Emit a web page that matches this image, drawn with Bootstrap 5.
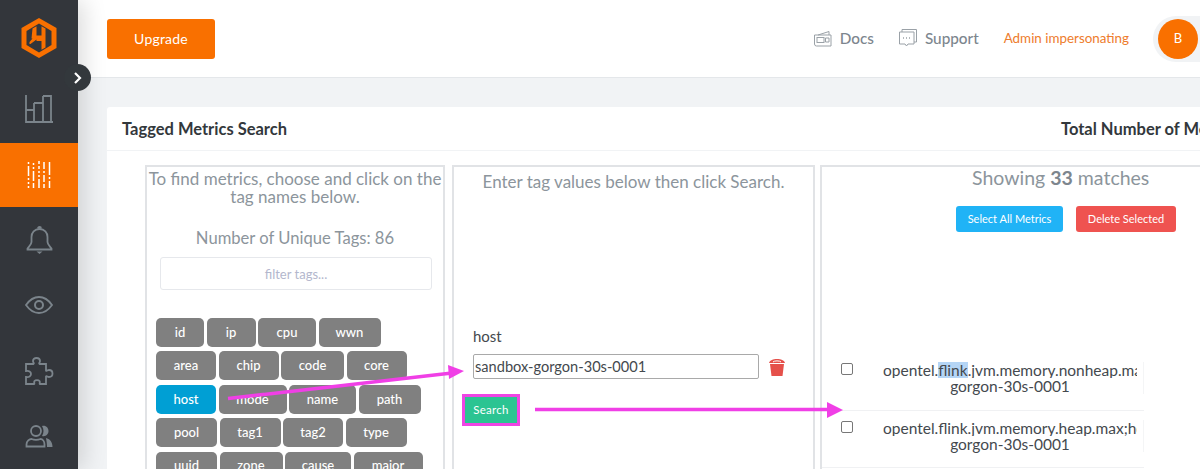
<!DOCTYPE html>
<html lang="en">
<head>
<meta charset="utf-8">
<title>Tagged Metrics Search</title>
<link href="https://cdn.jsdelivr.net/npm/bootstrap@5.3.0/dist/css/bootstrap.min.css" rel="stylesheet">
<style>
html,body{height:469px;overflow:hidden}
body{font-family:"Lato","Noto Sans",sans-serif;color:#3a3f44;background:#f1f3f5;font-size:16px;width:1200px;position:relative}
.shell{height:469px;width:1200px}
.rail{width:78px;flex:none;background:#33363b;box-shadow:6px 0 22px rgba(0,0,0,.14);position:relative;z-index:3}
.rail-logo{height:75px}
.rail-item{height:65.5px}
.rail-item.on{background:#f97000;height:64px}
.rail-item.first{height:68px}
.rail-toggle{position:absolute;left:64px;top:64px;width:27px;height:27px;border-radius:50%;background:#33383c;z-index:4}
.stage{width:1122px;flex:none;min-width:0}
.topbar{height:78px;background:#fff;border-bottom:1px solid #e4e7ea;padding-left:29px;flex:none}
.btn-up{background:#f97000;color:#fff;width:108px;height:40px;border-radius:3px;font-size:14px;border:0;padding:0;letter-spacing:.2px}
.toplink{color:#7d868e;font-size:15.3px;font-weight:500}
.gap-wide{margin-left:25px}
.admin{color:#ee7c2c;font-size:13.4px}
.halo{background:#f1f3f5;border-radius:24px 0 0 24px;width:47px;height:46px;padding-left:5px}
.avatar{width:40px;height:40px;border-radius:50%;background:#f97000;color:#fff;font-size:13px;flex:none}
.work{padding:29px 0 0 29px}
.sheet{width:1110px;height:400px;background:#fff;border-radius:3px 0 0 0}
.sheet-head{height:44px;border-bottom:1px solid #f1f3f5;padding:2px 0 0 15px;white-space:nowrap;overflow:hidden}
.sheet-title{font-size:16.5px;font-weight:700;color:#33383c;width:939px;flex:none}
.panes{padding:14px 0 0 38px;gap:7px}
.pane{border:2px solid #e1e3e6;border-bottom:0;height:320px;background:#fff;flex:none}
.pane-a{width:300px}
.pane-b{width:363px}
.pane-c{width:400px;margin-left:-2px}
.hint{color:#8c959c;font-size:17px;line-height:18px;text-align:center}
.hint-a{padding-top:3px}
.hint-count{margin-top:21px;line-height:22px;font-size:16.6px}
.filter{margin:8px 0 0 13px;width:272px;height:33px;border:1px solid #e6e8ec;border-radius:3px;font-size:13px;color:#b3b7cd;text-align:center;background:#fff}
.filter::placeholder{color:#b3b7cd}
.chips{margin:28px 0 0 9px;gap:4.4px 2.5px;width:275px}
.chip{height:29px;background:#808080;color:#fff;border-radius:5px;font-size:13px;font-weight:500;border:0;padding:0}
.chip.picked{background:#009fd4}
.w48{width:48px}.w49{width:49px}.w58{width:58px}.w60{width:60px}.w61{width:61px}.w62{width:62px}.w63{width:63px}.w66{width:66px}.w67{width:67px}.w68{width:68px}.w69{width:69px}
.hint-b{padding-top:6px}
.tag-label{margin:135px 0 0 19px;font-size:15px;line-height:20px;color:#44494e}
.tag-row{margin:8px 0 0 19px;gap:10px}
.tag-input{width:286px;height:25px;border:1px solid #a9a9a9;border-radius:2px;font-size:14.6px;color:#44494e;padding:0 1px;background:#fff}
.go-wrap{margin:15px 0 0 8px;width:58px;height:32px;border:3px solid #ef45e4;padding:0}
.go{background:#2bc492;color:#fff;width:100%;height:100%;font-size:11.5px;border:0;padding:0;letter-spacing:.3px}
.show{color:#8c959c;font-size:19.5px;line-height:24px;margin:-1px 0 0 150px}
.show b{font-weight:700;color:#7d868e}
.acts{margin:16px 0 0 134px;gap:13px}
.act{height:26px;border-radius:3px;color:#fff;font-size:11px;border:0;padding:0}
.act-all{background:#20b3f6;width:107px}
.act-del{background:#ef5350;width:100px}
.rows{margin-top:123px;width:322px}
.line-a{padding:0 0 0 19px}
.line-a.one{height:56px;padding-top:8px;border-bottom:1px solid #f0f1f3}
.line-a.two{height:57px;padding-top:10px;border-bottom:1px solid #f0f1f3}
.tick{width:12px;height:12px;flex:none;border:1px solid #777;border-radius:2px;background:#fff;margin:0;appearance:none;-webkit-appearance:none}
.metric{width:261px;margin-left:30px;padding-right:6px;font-size:15.5px;line-height:16px;color:#44494e;border-right:1px solid #f4f5f6;height:32px;margin-top:-1px}
.metric-top{overflow:hidden;white-space:nowrap}
.metric-sub{text-align:center}
.hl{background:#b5d5f5}
.overlay{position:absolute;left:0;top:0;z-index:5;pointer-events:none}
</style>
</head>
<body>
<div class="shell d-flex">
  <aside class="rail d-flex flex-column align-items-center">
    <div class="rail-logo w-100 d-flex justify-content-center align-items-center">
      <svg width="36" height="40" viewBox="0 0 36 40">
        <path d="M18 0 35.500 10v20L18 40 .5 30V10Z" fill="#f97000"/>
        <path d="M18 5.500 30.500 13v14L18 34.500 5.500 27V13Z" fill="#33363b"/>
        <path d="M11.500 10.500l4-2.200V17.500h5V8.300l4 2.200v19l-4 2.200V23h-5v-1.500l-6 4.500h-1v-2l3-3.500h-1z" fill="#f97000"/>
      </svg>
    </div>
    <div class="rail-item first w-100 d-flex justify-content-center align-items-center">
      <svg width="28" height="28" viewBox="0 0 28 28" fill="none" stroke="#7b848b" stroke-width="1.800">
        <path d="M1 0V27H28"/>
        <path d="M1 15H9V27M9 8H18V27M18 1H26V27M9 15V8M18 8V1"/>
      </svg>
    </div>
    <div class="rail-item on w-100 d-flex justify-content-center align-items-center">
      <svg width="24" height="28" viewBox="0 0 24 28" fill="none" stroke="#fff" stroke-width="1.500">
        <path d="M1.500 1v2M1.500 5v10M1.500 17v2M1.500 21v2M1.500 25v2" />
        <path d="M6.500 2v2M6.500 6v2M6.500 10v10M6.500 22v5"/>
        <path d="M12 0v3M12 5v3M12 10v2M12 14v2M12 18v9"/>
        <path d="M17 1v7M17 10v2M17 14v7M17 23v4"/>
        <path d="M22.500 1v13M22.500 16v2M22.500 20v7"/>
      </svg>
    </div>
    <div class="rail-item w-100 d-flex justify-content-center align-items-center">
      <svg width="27" height="28" viewBox="0 0 27 28" fill="none" stroke="#7b848b" stroke-width="1.800">
        <path d="M13.500 3c-5 0-8 3.500-8 8v5c0 2.500-2 4-4 6.500v1h24v-1c-2-2.500-4-4-4-6.500v-5c0-4.500-3-8-8-8z"/>
        <path d="M12 2.500a1.500 1.500 0 0 1 3 0" fill="#7b848b"/>
        <path d="M10.500 25.500h6l-3 2.500z" fill="#7b848b" stroke="none"/>
      </svg>
    </div>
    <div class="rail-item w-100 d-flex justify-content-center align-items-center">
      <svg width="28" height="18" viewBox="0 0 28 18" fill="none" stroke="#7b848b" stroke-width="1.800">
        <path d="M1 9c3.500-5 8-8 13-8s9.500 3 13 8c-3.500 5-8 8-13 8S4.500 14 1 9z"/>
        <circle cx="14" cy="9" r="4" stroke-width="2"/>
      </svg>
    </div>
    <div class="rail-item w-100 d-flex justify-content-center align-items-center">
      <svg width="29" height="28" viewBox="0 0 29 28" fill="none" stroke="#7b848b" stroke-width="1.800">
        <path d="M1 7h7.500c1-.5-.5-1.500-.5-3 0-2 1.500-3 3.500-3s3.500 1 3.500 3c0 1.500-1.500 2.500-.5 3H21v6.500c.5 1 1.500-.5 3-.5 2 0 3.500 1.500 3.500 3.500S26 20 24 20c-1.500 0-2.500-1.500-3-.5V27h-6c-1 0 .5-1.500-.5-3-1-1.200-4-1.200-5 0-1 1.500.5 3-.5 3H1v-7c3 .5 5-1 5-3s-2-3.500-5-3z"/>
      </svg>
    </div>
    <div class="rail-item w-100 d-flex justify-content-center align-items-center">
      <svg width="28" height="23" viewBox="0 0 28 23" fill="none" stroke="#7b848b" stroke-width="1.800">
        <circle cx="11" cy="6" r="5"/>
        <path d="M1.500 21.500v-2c0-3.500 3-5.500 5-5.500 2.500 1 6.500 1 9 0 2 0 4 2 4 5.500v2z"/>
        <path d="M17 1c4-1 6.500 2 6.500 5s-2.500 6-6.500 5c2-3 2-7 0-10z" fill="#7b848b" stroke="none"/>
        <path d="M21 13c3.500 1 6.500 3.500 6.500 9H22c0-3.500-.5-6-1-9z" fill="#7b848b" stroke="none"/>
      </svg>
    </div>
  </aside>
  <div class="rail-toggle d-flex justify-content-center align-items-center">
    <svg width="9" height="12" viewBox="0 0 9 12" fill="none" stroke="#fff" stroke-width="2.200"><path d="M2 1l5 5-5 5"/></svg>
  </div>
  <div class="stage d-flex flex-column">
    <header class="topbar d-flex align-items-center">
      <button class="btn-up" type="button">Upgrade</button>
      <div class="ms-auto d-flex align-items-center">
        <svg class="me-2" width="18" height="16" viewBox="0 0 18 16" fill="none" stroke="#9aa1a7" stroke-width="1"><path d="M.5 4h16.500v11H2.500a2 2 0 0 1-2-2zM4 4 15 .5V4"/><rect x="3" y="6.500" width="7" height="5"/><path d="M11.500 7h3.500v4h-3.500z"/></svg>
        <span class="toplink">Docs</span>
        <svg class="gap-wide me-2" width="18" height="19" viewBox="0 0 18 19" fill="none" stroke="#9aa1a7" stroke-width="1"><path d="M.5 3h14.500v12H9l-1.500 2L6 15H.5zM3 3V.5h14.500V13H15"/><path d="M4 9h1M7 9h1M10 9h1" stroke-width="1.500"/></svg>
        <span class="toplink">Support</span>
        <span class="admin gap-wide">Admin impersonating</span>
        <div class="halo ms-4 d-flex align-items-center">
          <div class="avatar d-flex justify-content-center align-items-center">B</div>
        </div>
      </div>
    </header>
    <main class="work">
      <section class="sheet">
        <div class="sheet-head d-flex align-items-center">
          <div class="sheet-title">Tagged Metrics Search</div>
          <div class="sheet-title">Total Number of Metrics</div>
        </div>
        <div class="panes d-flex">
          <div class="pane pane-a">
            <div class="hint hint-a">To find metrics, choose and click on the tag names below.</div>
            <div class="hint hint-count">Number of Unique Tags: 86</div>
            <input class="filter d-block" type="text" placeholder="filter tags...">
            <div class="chips d-flex flex-wrap">
              <button class="chip w48" type="button">id</button><button class="chip w49" type="button">ip</button><button class="chip w58" type="button">cpu</button><button class="chip w62" type="button">wwn</button>
              <button class="chip w60" type="button">area</button><button class="chip w60" type="button">chip</button><button class="chip w63" type="button">code</button><button class="chip w60" type="button">core</button>
              <button class="chip picked w60" type="button">host</button><button class="chip w68" type="button">mode</button><button class="chip w67" type="button">name</button><button class="chip w62" type="button">path</button>
              <button class="chip w61" type="button">pool</button><button class="chip w61" type="button">tag1</button><button class="chip w60" type="button">tag2</button><button class="chip w61" type="button">type</button>
              <button class="chip w61" type="button">uuid</button><button class="chip w63" type="button">zone</button><button class="chip w66" type="button">cause</button><button class="chip w69" type="button">major</button>
            </div>
          </div>
          <div class="pane pane-b">
            <div class="hint hint-b">Enter tag values below then click Search.</div>
            <div class="tag-label">host</div>
            <div class="tag-row d-flex align-items-center">
              <input class="tag-input" type="text" value="sandbox-gorgon-30s-0001">
              <svg width="16" height="18" viewBox="0 0 16 18"><path d="M1 6h14l-1.500 12h-11z" fill="#e5504a"/><path d="M0 5c1-3 4-4 8-4s7 1 8 4z" fill="#e5504a"/><path d="M4 4c1-1.500 7-1.500 8 0" fill="none" stroke="#fff" stroke-width="1"/></svg>
            </div>
            <div class="go-wrap"><button class="go d-block" type="button">Search</button></div>
          </div>
          <div class="pane pane-c">
            <div class="show">Showing <b>33</b> matches</div>
            <div class="acts d-flex">
              <button class="act act-all" type="button">Select All Metrics</button>
              <button class="act act-del" type="button">Delete Selected</button>
            </div>
            <div class="rows">
              <div class="line-a one d-flex">
                <input class="tick" type="checkbox" aria-label="select">
                <div class="metric">
                  <div class="metric-top">opentel.<span class="hl">flink</span>.jvm.memory.nonheap.max;host=sandbox-</div>
                  <div class="metric-sub">gorgon-30s-0001</div>
                </div>
              </div>
              <div class="line-a two d-flex">
                <input class="tick" type="checkbox" aria-label="select">
                <div class="metric">
                  <div class="metric-top">opentel.flink.jvm.memory.heap.max;host=sandbox-</div>
                  <div class="metric-sub">gorgon-30s-0001</div>
                </div>
              </div>
            </div>
          </div>
        </div>
      </section>
    </main>
  </div>
</div>
<svg class="overlay" width="1200" height="469" viewBox="0 0 1200 469">
  <path d="M228 398.500 452 373" stroke="#f03fe6" stroke-width="3.500" fill="none"/>
  <path d="M448 365 464 371 449 379Z" fill="#f03fe6"/>
  <path d="M535 409.500H828" stroke="#f03fe6" stroke-width="3.500" fill="none"/>
  <path d="M827 402 843 410 827 418Z" fill="#f03fe6"/>
</svg>
</body>
</html>
